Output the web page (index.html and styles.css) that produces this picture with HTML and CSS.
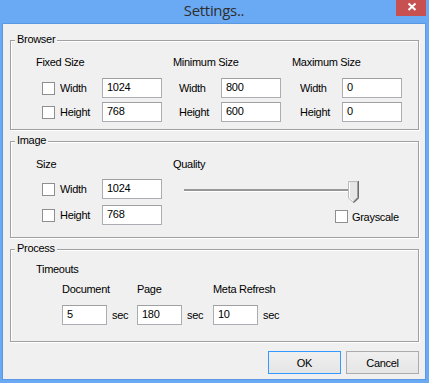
FILE: index.html
```html
<!DOCTYPE html>
<html>
<head>
<meta charset="utf-8">
<title>Settings..</title>
<link rel="stylesheet" href="styles.css">
</head>
<body>
<div class="window">
  <div class="titlebar">
    <span class="title">Settings..</span>
    <div class="close">
      <svg width="30" height="16" viewBox="0 0 30 16">
        <path d="M12.5 3.5 L19.5 10 M19.5 3.5 L12.5 10" stroke="#fff" stroke-width="2" fill="none"/>
      </svg>
    </div>
  </div>
  <div class="client">
    <div class="group browser">
      <span class="legend">Browser</span>
      <div class="col c1">
        <div class="heading">Fixed Size</div>
        <div class="row"><input type="checkbox" class="check"><span class="lbl">Width</span><input class="field" value="1024"></div>
        <div class="row"><input type="checkbox" class="check"><span class="lbl">Height</span><input class="field" value="768"></div>
      </div>
      <div class="col c2">
        <div class="heading">Minimum Size</div>
        <div class="row"><span class="lbl">Width</span><input class="field" value="800"></div>
        <div class="row"><span class="lbl">Height</span><input class="field" value="600"></div>
      </div>
      <div class="col c3">
        <div class="heading">Maximum Size</div>
        <div class="row"><span class="lbl">Width</span><input class="field" value="0"></div>
        <div class="row"><span class="lbl">Height</span><input class="field" value="0"></div>
      </div>
    </div>

    <div class="group image">
      <span class="legend">Image</span>
      <div class="col c1">
        <div class="heading">Size</div>
        <div class="row"><input type="checkbox" class="check"><span class="lbl">Width</span><input class="field" value="1024"></div>
        <div class="row"><input type="checkbox" class="check"><span class="lbl">Height</span><input class="field" value="768"></div>
      </div>
      <div class="col q">
        <div class="heading">Quality</div>
        <div class="slider">
          <div class="track"></div>
          <svg class="thumb" width="11" height="22" viewBox="0 0 11 22">
            <path d="M0.5 0.5 H10.5 V17 L5.5 21.5 L0.5 17 Z" fill="#e6e6e6" stroke="#b9b9b9" stroke-width="1"/>
            <path d="M1.5 1.5 V16.6 L5.5 20.2" stroke="#fff" stroke-width="1" fill="none"/>
            <path d="M10.5 0 V17 L5.5 21.5" stroke="#6b6b6b" stroke-width="1.2" fill="none"/>
            <path d="M9.5 1 V16.6 L5.5 20.2" stroke="#a0a0a0" stroke-width="1" fill="none"/>
          </svg>
        </div>
        <div class="gray"><input type="checkbox" class="check"><span>Grayscale</span></div>
      </div>
    </div>

    <div class="group process">
      <span class="legend">Process</span>
      <div class="heading timeouts">Timeouts</div>
      <div class="tcols">
        <div class="tcol t1">
          <div class="heading">Document</div>
          <div class="trow"><input class="field small" value="5"><span class="sec">sec</span></div>
        </div>
        <div class="tcol t2">
          <div class="heading">Page</div>
          <div class="trow"><input class="field small" value="180"><span class="sec">sec</span></div>
        </div>
        <div class="tcol t3">
          <div class="heading">Meta Refresh</div>
          <div class="trow"><input class="field small" value="10"><span class="sec">sec</span></div>
        </div>
      </div>
    </div>

    <div class="buttons">
      <button class="btn default">OK</button>
      <button class="btn">Cancel</button>
    </div>
  </div>
</div>
</body>
</html>
```

FILE: styles.css
```css
* { box-sizing: border-box; }

body {
  margin: 0;
  font-family: "Liberation Sans", Arial, sans-serif;
  font-size: 11px;
  letter-spacing: -0.3px;
  color: #000;
}

.window {
  position: relative;
  width: 429px;
  height: 383px;
  background: #6aaaf4;
  display: flex;
  flex-direction: column;
  padding: 0 3px 3px 2px;
}

.titlebar {
  height: 23px;
  display: flex;
  justify-content: center;
  align-items: flex-start;
  padding-top: 2px;
}

.title {
  font-family: "Open Sans", sans-serif;
  font-size: 15px;
  line-height: 16px;
  letter-spacing: -0.3px;
  color: #2e2e2e;
}

.close {
  position: absolute;
  top: 0;
  right: 3px;
  width: 30px;
  height: 16px;
  background: #c75050;
}

.close svg { display: block; }

.client {
  flex: 1;
  border: 1px solid #5a98e2;
  background: #f0f0f0;
  padding: 16px 6px 0 7px;
  display: flex;
  flex-direction: column;
}

.group {
  position: relative;
  border: 1px solid #a0a0a0;
  box-shadow: inset 1px 1px 0 #fff, 1px 1px 0 #fff;
}

.legend {
  position: absolute;
  top: -8px;
  left: 4px;
  padding: 0 2px;
  line-height: 13px;
  background: #f0f0f0;
}

.heading {
  line-height: 13px;
  height: 13px;
  white-space: nowrap;
}

.col { display: flex; flex-direction: column; }
.c1 { width: 137px; }
.c2 { width: 119px; }

.row {
  display: flex;
  align-items: center;
  height: 20px;
}

.check {
  appearance: none;
  -webkit-appearance: none;
  width: 13px;
  height: 13px;
  margin: 0 5px 0 0;
  border: 1px solid #8f8f8f;
  background: #fff;
  flex: none;
}

.lbl { width: 42px; flex: none; }

.field {
  appearance: none;
  -webkit-appearance: none;
  width: 60px;
  height: 20px;
  margin: 0;
  border: 1px solid #abadb3;
  border-top-color: #a0a0a0;
  background: #fff;
  font: inherit;
  letter-spacing: inherit;
  color: #000;
  padding: 0 0 3px 4px;
  outline: none;
}

/* Browser */
.browser {
  height: 90px;
  display: flex;
  padding: 15px 0 0 25px;
}
.browser .heading { margin-bottom: 9px; }
.browser .row + .row { margin-top: 4px; }
.c1 .row, .c2 .row { padding-left: 6px; }
.c3 .row { padding-left: 8px; }

/* Image */
.image {
  margin-top: 11px;
  height: 97px;
  display: flex;
  padding: 16px 0 0 25px;
}
.image .c1 .heading { margin-bottom: 8px; }
.image .row + .row { margin-top: 6px; }
.q .heading { margin-bottom: 10px; }

.slider {
  display: flex;
  align-items: flex-start;
  height: 22px;
  margin-left: 11px;
}
.track {
  width: 164px;
  height: 3px;
  margin-top: 8px;
  border-top: 2px solid #979797;
  border-bottom: 1px solid #fff;
}
.thumb { display: block; flex: none; }

.gray {
  display: flex;
  align-items: center;
  height: 13px;
  margin-top: 7px;
  padding-left: 162px;
}
.gray .check { margin-right: 4px; }

/* Process */
.process {
  margin-top: 11px;
  height: 93px;
  padding: 13px 0 0 25px;
}
.timeouts { margin-bottom: 7px; }
.tcols { display: flex; padding-left: 26px; }
.t1 { width: 75px; }
.t2 { width: 76px; }
.tcol .heading { margin-bottom: 9px; }
.trow { display: flex; align-items: center; height: 20px; }
.field.small { width: 45px; }
.sec { margin-left: 5px; }

/* Buttons */
.buttons {
  display: flex;
  justify-content: flex-end;
  gap: 5px;
  margin-top: 9px;
}
.btn {
  width: 73px;
  height: 23px;
  margin: 0;
  padding: 0;
  border: 1px solid #acacac;
  background: linear-gradient(#f0f0f0, #e5e5e5);
  font: inherit;
  letter-spacing: inherit;
  color: #000;
}
.btn.default { border-color: #3399ff; }
```
